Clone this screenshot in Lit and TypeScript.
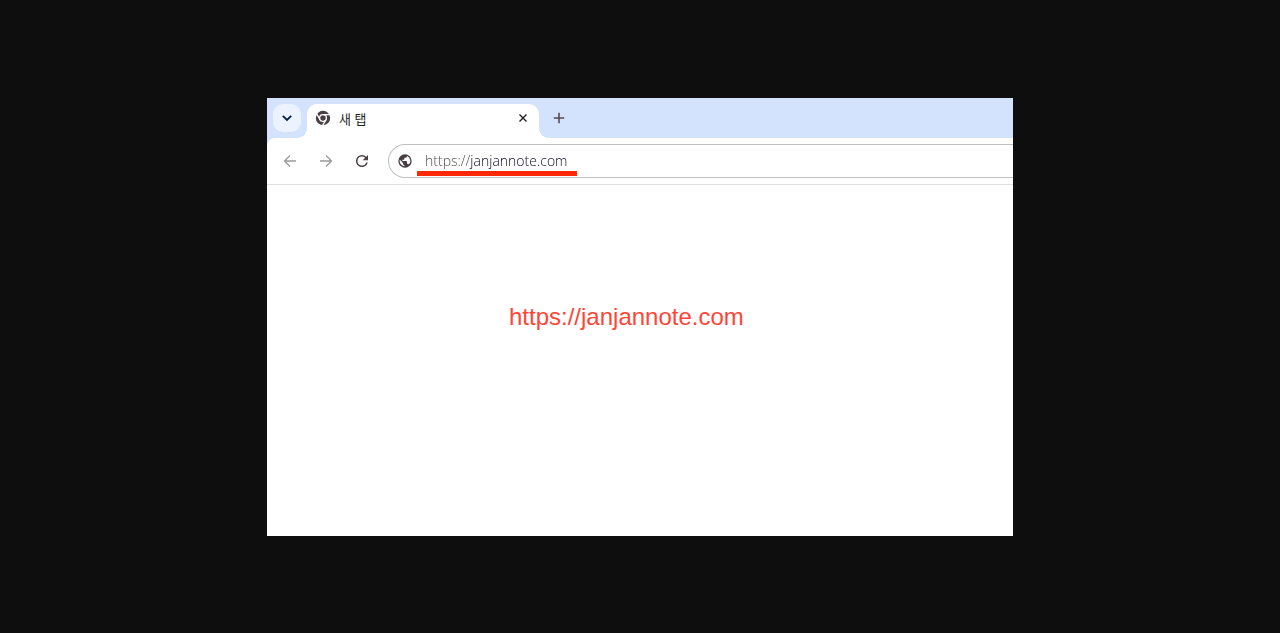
import { LitElement, html, css } from "lit";
import { customElement, property } from "lit/decorators.js";

@customElement("tab-strip")
class TabStrip extends LitElement {
  @property() label = "";

  static styles = css`
    :host {
      display: flex;
      height: 40px;
      padding-left: 6px;
      background: #d3e3fd;
    }
    button {
      display: flex;
      align-items: center;
      justify-content: center;
      padding: 0;
      border: 0;
      background: none;
      color: #5a4a52;
    }
    .search {
      width: 28px;
      height: 28px;
      margin: 6px 6px 0 0;
      border-radius: 10px;
      background: #ecf3fe;
      color: #041e49;
    }
    .tab {
      position: relative;
      display: flex;
      align-items: center;
      box-sizing: border-box;
      width: 232px;
      height: 34px;
      margin-top: 6px;
      padding: 0 8px 6px 8px;
      border-radius: 10px 10px 0 0;
      background: #fff;
    }
    .tab::before,
    .tab::after {
      content: "";
      position: absolute;
      bottom: 0;
      width: 10px;
      height: 10px;
    }
    .tab::before {
      right: 100%;
      background: radial-gradient(circle at 0 0, transparent 10px, #fff 10px);
    }
    .tab::after {
      left: 100%;
      background: radial-gradient(circle at 100% 0, transparent 10px, #fff 10px);
    }
    .label {
      flex: 1;
      margin-left: 8px;
      font: 13px/16px "Liberation Sans", "Noto Sans CJK KR", sans-serif;
      color: #1f1f1f;
      padding-top: 4px;
    }
    .close {
      width: 16px;
      height: 16px;
      color: #1f1f1f;
    }
    .add {
      width: 28px;
      height: 28px;
      margin: 6px 0 0 6px;
    }
    svg {
      display: block;
    }
  `;

  render() {
    return html`
      <button class="search" aria-label="탭 검색">
        <svg width="12" height="12" viewBox="0 0 12 12" fill="none" stroke="currentColor" stroke-width="1.8">
          <path d="M1.8 3.8 6 8l4.2-4.2" />
        </svg>
      </button>
      <div class="tab">
        <svg width="16" height="16" viewBox="0 0 16 16">
          <circle cx="8" cy="8" r="7.2" fill="#473d43" />
          <g fill="none" stroke="#fff" stroke-width="1.3">
            <circle cx="8" cy="8" r="3.4" />
            <path d="M8 4.6h7M5.05 9.7 1.5 3.6M10.95 9.7 7.4 15.8" />
          </g>
        </svg>
        <span class="label">${this.label}</span>
        <button class="close" aria-label="탭 닫기">
          <svg width="10" height="10" viewBox="0 0 10 10" stroke="currentColor" stroke-width="1.4">
            <path d="m1.5 1.5 7 7M8.500 1.500l-7 7" />
          </svg>
        </button>
      </div>
      <button class="add" aria-label="새 탭 열기">
        <svg width="12" height="12" viewBox="0 0 12 12" stroke="currentColor" stroke-width="1.6">
          <path d="M6 .8v10.4M.8 6h10.4" />
        </svg>
      </button>
    `;
  }
}

@customElement("address-bar")
class AddressBar extends LitElement {
  @property() url = "";

  static styles = css`
    :host {
      display: block;
      background: #d3e3fd;
    }
    .bar {
      display: flex;
      align-items: center;
      height: 46px;
      padding-left: 9px;
      border-bottom: 1px solid #dfdfe0;
      border-radius: 8px 0 0 0;
      background: #fff;
    }
    button {
      display: flex;
      align-items: center;
      justify-content: center;
      width: 28px;
      height: 28px;
      margin-right: 8px;
      padding: 0;
      border: 0;
      background: none;
      color: #473d43;
    }
    button:disabled {
      color: #9b9999;
    }
    .box {
      position: relative;
      display: flex;
      flex: 1;
      align-items: center;
      box-sizing: border-box;
      height: 34px;
      margin-left: 4px;
      padding-left: 8px;
      border: 1px solid #c0c0c2;
      border-right: 0;
      border-radius: 17px 0 0 17px;
    }
    .box::after {
      content: "";
      position: absolute;
      left: 28px;
      top: 26px;
      width: 160px;
      height: 5px;
      background: #ff2a05;
    }
    input {
      flex: 1;
      min-width: 0;
      height: 22px;
      margin-left: 12px;
      padding: 0 0 2px;
      border: 0;
      outline: 0;
      font: 340 14px/20px "Open Sans", sans-serif;
      color: #1c1c2c;
      background: linear-gradient(90deg, #4c4846 45px, #0a0a24 45px);
      background-clip: text;
      -webkit-background-clip: text;
      -webkit-text-fill-color: transparent;
    }
    svg {
      display: block;
    }
  `;

  render() {
    return html`
      <div class="bar">
        <button disabled aria-label="뒤로">
          <svg width="14" height="14" viewBox="0 0 14 14" fill="none" stroke="currentColor" stroke-width="1.3">
            <path d="M13 7H2M7 1.5 1.5 7 7 12.500" />
          </svg>
        </button>
        <button disabled aria-label="앞으로">
          <svg width="14" height="14" viewBox="0 0 14 14" fill="none" stroke="currentColor" stroke-width="1.3">
            <path d="M1 7h11M7 1.500 12.500 7 7 12.500" />
          </svg>
        </button>
        <button aria-label="새로고침">
          <svg width="18" height="18" viewBox="0 0 24 24" fill="currentColor">
            <path d="M17.650 6.350A7.960 7.960 0 0 0 12 4a8 8 0 1 0 7.730 10h-2.080A6 6 0 1 1 12 6c1.660 0 3.140.69 4.220 1.780L13 11h7V4z" />
          </svg>
        </button>
        <div class="box">
          <svg width="16" height="16" viewBox="0 0 24 24" fill="#473d43">
            <path d="M12 2a10 10 0 1 0 0 20 10 10 0 0 0 0-20zm-1 17.930A8 8 0 0 1 4.210 10.210L9 15v1a2 2 0 0 0 2 2zm6.900-2.540A2 2 0 0 0 16 16h-1v-3a1 1 0 0 0-1-1H8v-2h2a1 1 0 0 0 1-1V7h2a2 2 0 0 0 2-2v-.41a8 8 0 0 1 2.900 12.800z" />
          </svg>
          <input type="text" aria-label="주소창" spellcheck="false" .value=${this.url} />
        </div>
      </div>
    `;
  }
}

@customElement("app-root")
class AppRoot extends LitElement {
  static styles = css`
    :host {
      display: flex;
      box-sizing: border-box;
      min-height: 100vh;
      padding: 98px 267px 97px;
      background: #0e0e0e;
    }
    .window {
      display: flex;
      flex: 1;
      flex-direction: column;
      min-width: 0;
      background: #fff;
    }
    main {
      flex: 1;
      padding: 118px 0 0 242px;
    }
    p {
      margin: 0;
      font: 24px/28px "Liberation Sans", Arial, sans-serif;
      color: #ff4536;
    }
  `;

  render() {
    const url = "https://janjannote.com";
    return html`
      <div class="window">
        <tab-strip label="새 탭"></tab-strip>
        <address-bar .url=${url}></address-bar>
        <main><p>${url}</p></main>
      </div>
    `;
  }
}
